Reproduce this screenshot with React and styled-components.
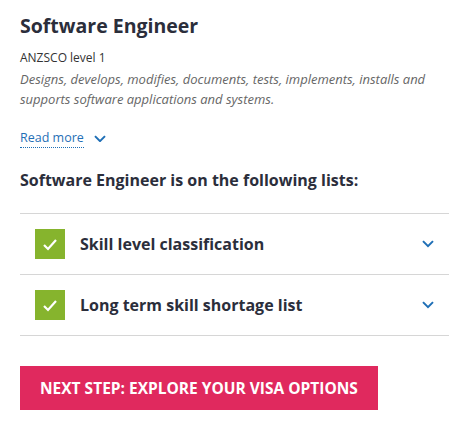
import styled, { createGlobalStyle } from "styled-components";

const GlobalStyle = createGlobalStyle`
  body {
    margin: 0;
    background: #fff;
    font-family: "Open Sans", "Noto Sans", sans-serif;
    color: #2b2e3b;
  }
`;

const Page = styled.div`
  padding: 12px 20px 20px;
`;

const Title = styled.h1`
  margin: 0;
  font-size: 19.5px;
  line-height: 28px;
  font-weight: 700;
  color: #2b2e3b;
`;

const Level = styled.div`
  margin-top: 9px;
  font-size: 12px;
  line-height: 18px;
  color: #333;
`;

const Desc = styled.p`
  margin: 2px 0 0;
  font-size: 13px;
  line-height: 20px;
  font-style: italic;
  color: #666;
`;

const ReadMore = styled.div`
  margin-top: 20px;
  display: flex;
  align-items: center;
  gap: 10px;
`;

const ReadLink = styled.a`
  font-size: 12.5px;
  line-height: 18px;
  color: #1f6fb6;
  text-decoration: none;
  border-bottom: 1px dotted #1f6fb6;
`;

const ListsHeading = styled.h2`
  margin: 21px 0 0;
  font-size: 16px;
  line-height: 22px;
  font-weight: 700;
  color: #2b2e3b;
`;

const List = styled.div`
  margin-top: 22px;
  border-top: 1px solid #d6d6d6;
`;

const Row = styled.div`
  height: 60px;
  display: flex;
  align-items: center;
  padding: 0 15px;
  border-bottom: 1px solid #d6d6d6;
`;

const Check = styled.div`
  width: 30px;
  height: 30px;
  background: #86b42d;
  display: flex;
  align-items: center;
  justify-content: center;
  flex-shrink: 0;
`;

const RowLabel = styled.span`
  margin-left: 15px;
  flex: 1;
  font-size: 16px;
  font-weight: 700;
  color: #2b2e3b;
`;

const NextButton = styled.button`
  margin-top: 30px;
  height: 44px;
  padding: 0 20px;
  border: none;
  background: #e0295e;
  color: #fff;
  font-family: inherit;
  font-size: 15.5px;
  font-weight: 700;
  text-transform: uppercase;
  cursor: pointer;
`;

const Chevron = ({ size = 12, color = "#1f6fb6" }) => (
  <svg width={size} height={size * 0.6} viewBox="0 0 12 7">
    <path d="M1 1l5 5 5-5" fill="none" stroke={color} strokeWidth="2" />
  </svg>
);

const Tick = () => (
  <svg width="16" height="13" viewBox="0 0 16 13">
    <path d="M2 7l4 4 8-9" fill="none" stroke="#fff" strokeWidth="2.2" />
  </svg>
);

const lists = ["Skill level classification", "Long term skill shortage list"];

export default function App() {
  return (
    <Page>
      <GlobalStyle />
      <Title>Software Engineer</Title>
      <Level>ANZSCO level 1</Level>
      <Desc>
        Designs, develops, modifies, documents, tests, implements, installs and supports software applications and systems.
      </Desc>
      <ReadMore>
        <ReadLink href="#">Read more</ReadLink>
        <Chevron />
      </ReadMore>
      <ListsHeading>Software Engineer is on the following lists:</ListsHeading>
      <List>
        {lists.map((name) => (
          <Row key={name}>
            <Check>
              <Tick />
            </Check>
            <RowLabel>{name}</RowLabel>
            <Chevron size={12} />
          </Row>
        ))}
      </List>
      <NextButton>Next step: explore your visa options</NextButton>
    </Page>
  );
}
